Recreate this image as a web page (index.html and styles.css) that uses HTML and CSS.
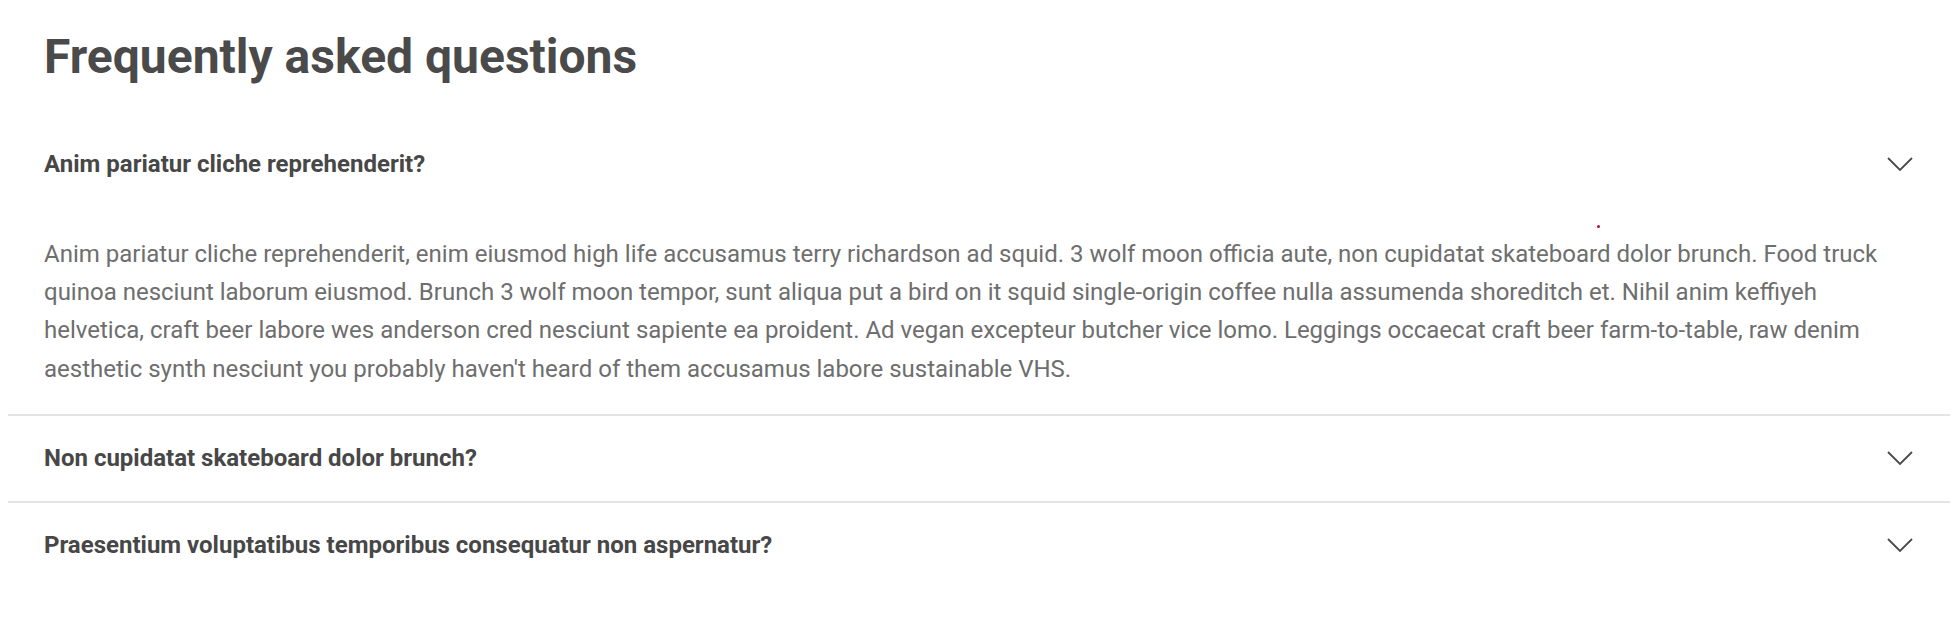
FILE: index.html
```html
<!DOCTYPE html>
<html lang="en">
<head>
<meta charset="utf-8">
<title>FAQ</title>
<link rel="stylesheet" href="styles.css">
</head>
<body>
<section class="faq">
  <h2 class="faq-title">Frequently asked questions</h2>
  <div class="faq-list">
    <div class="faq-item open">
      <button class="faq-question" type="button">
        <span>Anim pariatur cliche reprehenderit?</span>
        <svg class="chevron" viewBox="0 0 26 14" width="26" height="14" aria-hidden="true"><path d="M1 1 L13 13 L25 1" /></svg>
      </button>
      <div class="faq-answer">
        <p>Anim pariatur cliche reprehenderit, enim eiusmod high life accusamus terry richardson ad squid. 3 wolf moon officia aute, non cupidatat skateboard dolor brunch. Food truck quinoa nesciunt laborum eiusmod. Brunch 3 wolf moon tempor, sunt aliqua put a bird on it squid single-origin coffee nulla assumenda shoreditch et. Nihil anim keffiyeh helvetica, craft beer labore wes anderson cred nesciunt sapiente ea proident. Ad vegan excepteur butcher vice lomo. Leggings occaecat craft beer farm-to-table, raw denim aesthetic synth nesciunt you probably haven't heard of them accusamus labore sustainable VHS.</p>
      </div>
      <span class="dot"></span>
    </div>
    <div class="faq-item">
      <button class="faq-question" type="button">
        <span>Non cupidatat skateboard dolor brunch?</span>
        <svg class="chevron" viewBox="0 0 26 14" width="26" height="14" aria-hidden="true"><path d="M1 1 L13 13 L25 1" /></svg>
      </button>
    </div>
    <div class="faq-item">
      <button class="faq-question" type="button">
        <span>Praesentium voluptatibus temporibus consequatur non aspernatur?</span>
        <svg class="chevron" viewBox="0 0 26 14" width="26" height="14" aria-hidden="true"><path d="M1 1 L13 13 L25 1" /></svg>
      </button>
    </div>
  </div>
</section>
</body>
</html>
```

FILE: styles.css
```css
html, body {
  background: #ffffff;
}
body {
  margin: 8px;
  font-family: Roboto, "Liberation Sans", Arial, sans-serif;
  color: #444444;
}
.faq-title {
  margin: 20px 0 36px;
  padding: 0 36px;
  font-size: 48px;
  line-height: 1.2;
  font-weight: 700;
  color: #4a4a4a;
}
.faq-list {
  display: flex;
  flex-direction: column;
}
.faq-item {
  position: relative;
}
.faq-item + .faq-item {
  border-top: 2px solid #e4e4e4;
}
.faq-question {
  display: flex;
  align-items: center;
  justify-content: space-between;
  width: 100%;
  padding: 28px 36px 29px 36px;
  border: 0;
  background: transparent;
  font-family: inherit;
  font-size: 24px;
  line-height: 28px;
  font-weight: 700;
  color: #474747;
  text-align: left;
  cursor: pointer;
}
.chevron {
  flex: none;
  margin-right: 1px;
  fill: none;
  stroke: #4a4a4a;
  stroke-width: 1.8;
}
.faq-answer {
  padding: 28px 36px 26px;
}
.faq-answer p {
  margin: 0;
  font-size: 24px;
  line-height: 1.6;
  color: #6e6e6e;
}
.dot {
  position: absolute;
  left: 1589px;
  top: 103px;
  width: 3px;
  height: 3px;
  border-radius: 50%;
  background: #b3102e;
}
```
